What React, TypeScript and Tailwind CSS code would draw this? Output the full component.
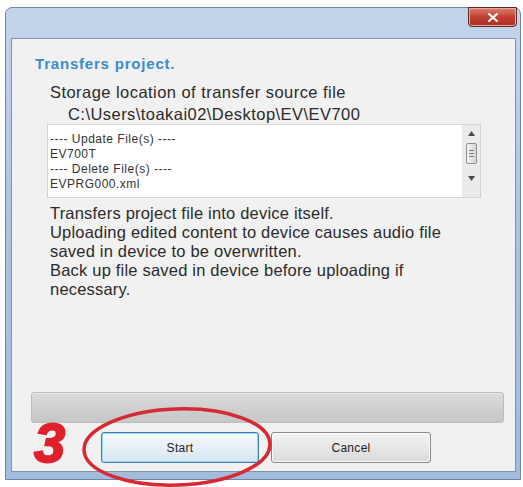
const listLines = [
  "---- Update File(s) ----",
  "EV700T",
  "---- Delete File(s) ----",
  "EVPRG000.xml",
]

const notes = [
  "Transfers project file into device itself.",
  "Uploading edited content to device causes audio file",
  "saved in device to be overwritten.",
  "Back up file saved in device before uploading if",
  "necessary.",
]

function ScrollBar() {
  return (
    <div className="flex w-[18px] flex-col items-center bg-[#ebebeb] pt-[6px]">
      <svg width="7" height="5" viewBox="0 0 7 5">
        <path d="M0 5 L3.5 0 L7 5 Z" fill="#4a4a4a" />
      </svg>
      <div className="mt-[7px] flex h-[21px] w-[11px] flex-col items-center justify-center gap-[2px] rounded-[2px] border border-[#8e8e8e] bg-gradient-to-r from-[#f4f4f4] to-[#d6d6d6]">
        <span className="block h-px w-[5px] bg-[#7a7a7a]" />
        <span className="block h-px w-[5px] bg-[#7a7a7a]" />
        <span className="block h-px w-[5px] bg-[#7a7a7a]" />
      </div>
      <svg className="mt-[12px]" width="7" height="5" viewBox="0 0 7 5">
        <path d="M0 0 L3.5 5 L7 0 Z" fill="#4a4a4a" />
      </svg>
    </div>
  )
}

function Button({ label, focused }: { label: string; focused?: boolean }) {
  return (
    <button
      className={
        focused
          ? "flex h-[31px] w-[158px] items-center justify-center rounded-[3px] border border-[#3c7fb1] bg-gradient-to-b from-[#f4f9fc] to-[#d9e6ef] text-[12px] tracking-[0.3px] text-[#222] shadow-[inset_0_0_0_1px_#9ed6f2]"
          : "flex h-[31px] w-[160px] items-center justify-center rounded-[3px] border border-[#8a8a8a] bg-gradient-to-b from-[#f4f4f4] to-[#dadada] text-[12px] tracking-[0.3px] text-[#222] shadow-[inset_0_0_0_1px_#fbfbfb]"
      }
    >
      {label}
    </button>
  )
}

export default function App() {
  return (
    <div
      className="relative h-[487px] w-[523px] overflow-hidden bg-white"
      style={{ fontFamily: '"Liberation Sans", Arial, sans-serif' }}
    >
      <div className="ml-[5px] mt-[7px] flex h-[473px] w-[516px] flex-col rounded-t-[7px] border border-[#6d86a8] bg-gradient-to-b from-[#c3d5ea] via-[#abc2df] to-[#a3bcdc] pb-[7px] pl-[5px] pr-[4px]">
        {/* title bar */}
        <div className="flex h-[30px] shrink-0 justify-end">
          <div className="-mt-px mr-[-1px] flex h-[20px] w-[49px] items-center justify-center rounded-b-[4px] border border-[#5a2a2a] bg-gradient-to-b from-[#dc7e74] via-[#c2402f] to-[#a92f22] shadow-[inset_0_0_0_1px_#eea59c]">
            <svg width="10" height="9" viewBox="0 0 10 9">
              <path
                d="M1 1 L9 8 M9 1 L1 8"
                stroke="#fff"
                strokeWidth="2.2"
                strokeLinecap="round"
              />
            </svg>
          </div>
        </div>

        {/* client area */}
        <div className="flex flex-1 flex-col border border-[#7f93ad] bg-[#f1f1f1] pl-[23px] pr-[12px] pt-[17px]">
          <div className="text-[15px] font-bold leading-[16px] tracking-[0.8px] text-[#3a8ccd]">
            Transfers project.
          </div>
          <div className="mt-[11px] pl-[15px] text-[16.5px] leading-[18px] tracking-[0.45px] text-[#2b2b2b]">
            Storage location of transfer source file
          </div>
          <div className="mt-[4px] pl-[33px] text-[16.5px] leading-[18px] tracking-[0.45px] text-[#2b2b2b]">
            C:\Users\toakai02\Desktop\EV\EV700
          </div>

          <div className="ml-[12px] mt-[1px] flex h-[74px] w-[434px] border border-[#d4d4d4] bg-white">
            <div className="flex flex-1 flex-col pl-[2px] pt-[7px]">
              {listLines.map((line) => (
                <div
                  key={line}
                  className="text-[12px] leading-[15px] tracking-[0.5px] text-[#333]"
                >
                  {line}
                </div>
              ))}
            </div>
            <ScrollBar />
          </div>

          <div className="mt-[6px] pl-[15px]">
            {notes.map((line) => (
              <div
                key={line}
                className="text-[16.5px] leading-[19px] tracking-[0.2px] text-[#2b2b2b]"
              >
                {line}
              </div>
            ))}
          </div>

          <div className="mb-[9px] ml-[-4px] mr-[-1px] mt-auto h-[31px] rounded-[3px] border border-[#bdbdbd] bg-gradient-to-b from-[#dcdcdc] via-[#d0d0d0] to-[#c6c6c6] shadow-[inset_0_1px_0_#ebebeb]" />

          <div className="mb-[8px] flex gap-[12px] pl-[66px]">
            <Button label="Start" focused />
            <Button label="Cancel" />
          </div>
        </div>
      </div>

      {/* step annotation */}
      <div className="absolute left-[34px] top-[415px] text-[56px] font-bold italic leading-[56px] text-[#e0202a] [-webkit-text-stroke:2px_#e0202a]">
        3
      </div>
      <svg
        className="absolute left-[80px] top-[405px]"
        width="196"
        height="84"
        viewBox="0 0 196 84"
      >
        <ellipse
          cx="97"
          cy="42"
          rx="93"
          ry="38"
          fill="none"
          stroke="#d42a34"
          strokeWidth="3.5"
          transform="rotate(-2 97 42)"
        />
      </svg>
    </div>
  )
}
